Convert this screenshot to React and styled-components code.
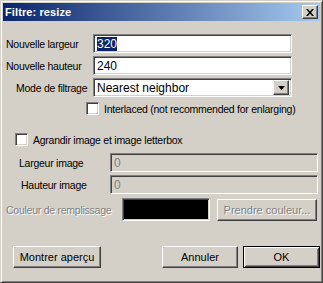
import React from "react";
import styled, { createGlobalStyle, css } from "styled-components";

const Global = createGlobalStyle`
  html, body { margin: 0; padding: 0; background: #d4d0c8; }
  body { font-family: "Liberation Sans", Arial, sans-serif; font-size: 10.5px; letter-spacing: -0.25px; color: #000; }
`;

const sunken = css`
  border-style: solid;
  border-width: 1px;
  border-color: #808080 #fff #fff #808080;
  box-shadow: inset 1px 1px 0 #404040, inset -1px -1px 0 #d4d0c8;
`;

const raised = css`
  border-style: solid;
  border-width: 1px;
  border-color: #fff #404040 #404040 #fff;
  box-shadow: inset -1px -1px 0 #808080, inset 1px 1px 0 #d4d0c8;
`;

const Window = styled.div`
  box-sizing: border-box;
  width: 323px;
  height: 283px;
  background: #d4d0c8;
  border-style: solid;
  border-width: 1px;
  border-color: #d4d0c8 #404040 #404040 #d4d0c8;
  box-shadow: inset 1px 1px 0 #fff, inset -1px -1px 0 #808080;
  padding: 2px;
  display: flex;
  flex-direction: column;
`;

const TitleBar = styled.div`
  height: 18px;
  background: linear-gradient(to right, #0a246a, #a6caf0);
  display: flex;
  align-items: center;
  justify-content: space-between;
  padding: 0 2px 0 2px;
`;

const Title = styled.span`
  color: #fff;
  font-weight: bold;
  font-size: 11px;
  letter-spacing: 0.1px;
`;

const CloseBtn = styled.div`
  box-sizing: border-box;
  width: 16px;
  height: 14px;
  background: #d4d0c8;
  ${raised};
  display: flex;
  align-items: center;
  justify-content: center;
`;

const Body = styled.div`
  display: flex;
  flex-direction: column;
  padding: 13px 0 0 0;
`;

const Row = styled.div`
  display: flex;
  align-items: center;
  height: ${(p) => p.$h || 19}px;
  margin-top: ${(p) => p.$mt || 0}px;
`;

const Label = styled.span`
  box-sizing: border-box;
  width: ${(p) => p.$w}px;
  padding-left: ${(p) => p.$pl}px;
  white-space: nowrap;
  color: ${(p) => (p.$disabled ? "#808080" : "#000")};
  text-shadow: ${(p) => (p.$disabled ? "1px 1px 0 #fff" : "none")};
`;

const Field = styled.div`
  box-sizing: border-box;
  width: ${(p) => p.$w}px;
  height: 100%;
  ${sunken};
  background: ${(p) => (p.$disabled ? "#d4d0c8" : "#fff")};
  color: ${(p) => (p.$disabled ? "#808080" : "#000")};
  display: flex;
  align-items: center;
  padding-left: 3px;
  font-size: 12px;
  letter-spacing: 0;
`;

const Selected = styled.span`
  background: #0a246a;
  color: #fff;
`;

const SelectBox = styled(Field)`
  padding-right: 2px;
  justify-content: space-between;
`;

const DropBtn = styled.div`
  box-sizing: border-box;
  width: 16px;
  height: 15px;
  background: #d4d0c8;
  ${raised};
  display: flex;
  align-items: center;
  justify-content: center;
`;

const Check = styled.div`
  box-sizing: border-box;
  width: 13px;
  height: 13px;
  background: #fff;
  ${sunken};
  margin-left: ${(p) => p.$ml}px;
  margin-right: 5px;
`;

const Swatch = styled.div`
  box-sizing: border-box;
  width: 88px;
  height: 23px;
  ${sunken};
  background: #000;
`;

const Button = styled.div`
  box-sizing: border-box;
  width: ${(p) => p.$w}px;
  height: ${(p) => p.$h || 22}px;
  margin-left: ${(p) => p.$ml || 0}px;
  background: #d4d0c8;
  ${raised};
  display: flex;
  align-items: center;
  justify-content: center;
  font-size: 11px;
  letter-spacing: 0;
  color: ${(p) => (p.$disabled ? "#808080" : "#000")};
  text-shadow: ${(p) => (p.$disabled ? "1px 1px 0 #fff" : "none")};
  ${(p) =>
    p.$default &&
    css`
      border: 1px solid #000;
      box-shadow: inset 1px 1px 0 #fff, inset -1px -1px 0 #404040,
        inset 2px 2px 0 #d4d0c8, inset -2px -2px 0 #808080;
    `}
`;

export default function App() {
  return (
    <>
      <Global />
      <Window>
        <TitleBar>
          <Title>Filtre: resize</Title>
          <CloseBtn>
            <svg width="8" height="7" viewBox="0 0 8 7">
              <path d="M0 0h2l2 2.5L6 0h2L5 3.5 8 7H6L4 4.5 2 7H0l3-3.5z" fill="#000" />
            </svg>
          </CloseBtn>
        </TitleBar>
        <Body>
          <Row $mt={0}>
            <Label $w={90} $pl={3}>Nouvelle largeur</Label>
            <Field $w={199}><Selected>320</Selected></Field>
          </Row>
          <Row $mt={3}>
            <Label $w={90} $pl={3}>Nouvelle hauteur</Label>
            <Field $w={199}>240</Field>
          </Row>
          <Row $mt={3}>
            <Label $w={90} $pl={13}>Mode de filtrage</Label>
            <SelectBox $w={199}>
              <span>Nearest neighbor</span>
              <DropBtn>
                <svg width="7" height="4" viewBox="0 0 7 4">
                  <path d="M0 0h7L3.5 4z" fill="#000" />
                </svg>
              </DropBtn>
            </SelectBox>
          </Row>
          <Row $mt={5} $h={13}>
            <Check $ml={83} />
            <span>Interlaced (not recommended for enlarging)</span>
          </Row>
          <Row $mt={18} $h={13}>
            <Check $ml={12} />
            <span>Agrandir image et image letterbox</span>
          </Row>
          <Row $mt={7}>
            <Label $w={107} $pl={16}>Largeur image</Label>
            <Field $w={208} $disabled>0</Field>
          </Row>
          <Row $mt={3}>
            <Label $w={107} $pl={18}>Hauteur image</Label>
            <Field $w={208} $disabled>0</Field>
          </Row>
          <Row $mt={4} $h={23}>
            <Label $w={119} $pl={3} $disabled>Couleur de remplissage</Label>
            <Swatch />
            <Button $w={100} $ml={7} $h={22} $disabled>Prendre couleur...</Button>
          </Row>
          <Row $mt={25} $h={22}>
            <Button $w={88} $ml={10}>Montrer aperçu</Button>
            <Button $w={76} $ml={61}>Annuler</Button>
            <Button $w={77} $ml={5} $default>OK</Button>
          </Row>
        </Body>
      </Window>
    </>
  );
}
